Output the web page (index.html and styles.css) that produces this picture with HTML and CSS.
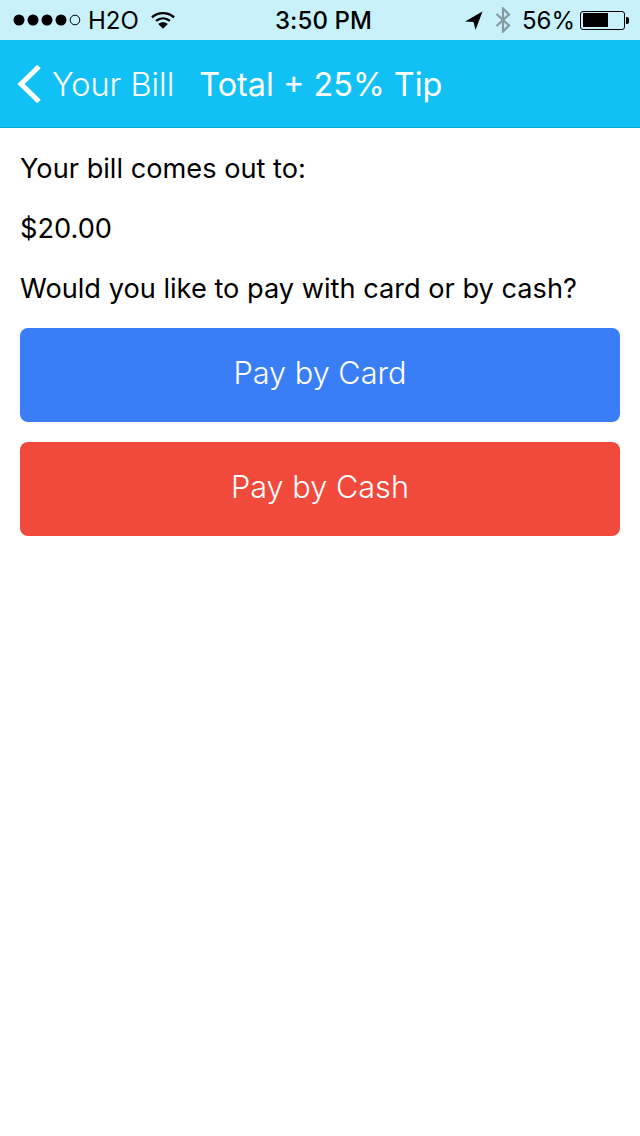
FILE: index.html
```html
<!DOCTYPE html>
<html lang="en">
<head>
<meta charset="utf-8">
<title>Total + 25% Tip</title>
<link rel="stylesheet" href="styles.css">
</head>
<body>
<div class="status">
  <div class="status-side">
    <svg class="dots" width="68" height="12" viewBox="0 0 68 12"><circle cx="6" cy="6" r="5.5" fill="#000"/><circle cx="20" cy="6" r="5.5" fill="#000"/><circle cx="34" cy="6" r="5.5" fill="#000"/><circle cx="48" cy="6" r="5.5" fill="#000"/><circle cx="62" cy="6" r="4.8" fill="none" stroke="#000" stroke-width="1"/></svg>
    <span class="carrier">H2O</span>
    <svg class="wifi" width="24" height="18" viewBox="0 0 26 19"><path d="M1 6.5C8 .5 18 .5 25 6.500" fill="none" stroke="#000" stroke-width="2.600"/><path d="M5.500 10.500C10 6.800 16 6.800 20.500 10.500" fill="none" stroke="#000" stroke-width="2.600"/><path d="M13 19L7.800 13.800C10.800 11.300 15.200 11.300 18.200 13.800Z" fill="#000"/></svg>
  </div>
  <div class="time">3:50 PM</div>
  <div class="status-side status-right">
    <svg class="arrow" width="18" height="19" viewBox="0 0 18 19"><path d="M17.500 .5L0 10.500L8.500 11L10.500 19Z" fill="#000"/></svg>
    <svg class="bt" width="16" height="26" viewBox="0 0 16 26"><path d="M1.500 7L14 18.500L8 24.500V1.500L14 7.500L1.500 19" fill="none" stroke="#84989f" stroke-width="2.200"/></svg>
    <span class="pct">56%</span>
    <div class="battery"><div class="battery-body"><div class="battery-fill"></div></div><div class="battery-tip"></div></div>
  </div>
</div>
<header class="nav">
  <svg class="chevron" width="26" height="40" viewBox="0 0 26 40"><path d="M23 2.500L5 20L23 37.500" fill="none" stroke="#fff" stroke-width="5"/></svg>
  <span class="back">Your Bill</span>
  <h1 class="title">Total + 25% Tip</h1>
</header>
<main class="content">
  <p class="line">Your bill comes out to:</p>
  <p class="line">$20.00</p>
  <p class="line">Would you like to pay with card or by cash?</p>
  <button class="btn btn-card">Pay by Card</button>
  <button class="btn btn-cash">Pay by Cash</button>
</main>
</body>
</html>
```
FILE: styles.css
```css
* { box-sizing: border-box; }
html, body { margin: 0; padding: 0; background: #fff; }
body { width: 640px; height: 1136px; overflow: hidden; font-family: Inter, "Liberation Sans", sans-serif; color: #000; }

.status { height: 40px; background: #c8f1fa; display: flex; align-items: center; justify-content: space-between; padding: 0 11px 0 13px; position: relative; }
.status-side { display: flex; align-items: center; }
.carrier { font-size: 24px; margin-left: 7px; letter-spacing: 0; }
.wifi { margin-left: 12px; }
.time { position: absolute; left: 0; right: 0; padding-left: 7px; text-align: center; font-size: 24px; font-weight: 500; letter-spacing: .1px; }
.status-right { position: relative; }
.arrow { margin-right: 12px; }
.bt { margin-right: 11px; }
.pct { font-size: 24px; margin-right: 5px; }
.battery { display: flex; align-items: center; }
.battery-body { width: 45px; height: 19px; border: 1px solid #000; border-radius: 3px; padding: 1.500px; }
.battery-fill { width: 25px; height: 100%; background: #000; }
.battery-tip { width: 3px; height: 7px; background: #000; border-radius: 0 2px 2px 0; margin-left: 1px; }

.nav { height: 88px; background: #11c1f5; border-bottom: 1px solid #0fa3d0; display: flex; align-items: center; color: #fff; padding-left: 16px; }
.chevron { flex: none; }
.back { font-size: 32.5px; margin-left: 10px; padding-top: 2px; font-weight: 300; }
.title { font-size: 32.4px; font-weight: 400; margin: 0 0 0 25px; padding-top: 2px; letter-spacing: 0; }

.content { padding: 24px 20px 0; display: flex; flex-direction: column; }
.line { margin: 0 0 26px; font-size: 27.2px; line-height: 34px; }
.line:last-of-type { margin-bottom: 22px; }
.btn { height: 94px; border: 0; border-radius: 8px; color: #fff; font: 300 30.7px Inter, "Liberation Sans", sans-serif; padding: 0 0 6px; margin-bottom: 20px; }
.btn-card { background: #3a7ef7; }
.btn-cash { background: #f1493b; }
```
